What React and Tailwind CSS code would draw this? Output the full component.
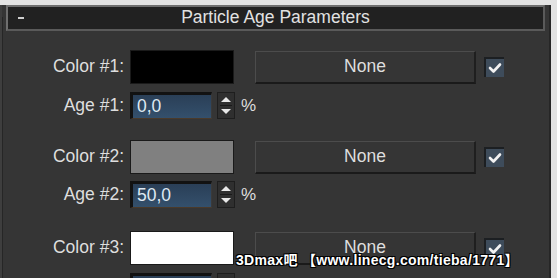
import React from 'react';

const font = { fontFamily: '"Liberation Sans", Arial, sans-serif' };

const Label = ({ children }) => (
  <div className="w-[124px] shrink-0 text-right text-[17.5px] text-[#dedede] leading-none">{children}</div>
);

const Check = () => (
  <div className="w-[20px] h-[20px] bg-[#3e4c5b] border-t-2 border-l-2 border-[#1c1f22] flex items-center justify-center">
    <svg width="14" height="12" viewBox="0 0 14 12">
      <path d="M2 6 L5.5 9.5 L12 2.5" stroke="#f2f2f2" strokeWidth="2.6" fill="none" strokeLinecap="round" strokeLinejoin="round" />
    </svg>
  </div>
);

const NoneButton = () => (
  <div className="ml-[21px] w-[221px] h-[33px] border-t border-l border-[#4c4c4c] border-b-2 border-r-2 border-b-[#1a1a1a] border-r-[#1f1f1f] bg-[#353535] flex items-center justify-center text-[17.5px] text-[#dedede]">
    None
  </div>
);

const ColorRow = ({ n, color }) => (
  <div className="flex items-center h-[34px] shrink-0">
    <Label>Color #{n}:</Label>
    <div className="ml-[6px] w-[104px] h-[34px] border border-[#1a1a1a]" style={{ background: color }} />
    <NoneButton />
    <div className="ml-[8px]"><Check /></div>
  </div>
);

const AgeRow = ({ n, value }) => (
  <div className="flex items-center h-[27px] shrink-0">
    <Label>Age #{n}:</Label>
    <div className="ml-[6px] w-[82px] h-[27px] border-t-[3px] border-l-[3px] border-[#121212] border-b border-r border-b-[#4a3a2a] border-r-[#3a3a3a] bg-gradient-to-b from-[#2a3f57] to-[#34506c] flex items-center pl-[4px] text-[17.5px] text-[#dfe9f2] leading-none">
      {value}
    </div>
    <div className="ml-[5px] w-[18px] h-[27px] bg-[#2f2f2f] border border-[#1e1e1e] flex flex-col items-center justify-center gap-[3px]">
      <div className="w-0 h-0 border-l-[5px] border-r-[5px] border-b-[5px] border-l-transparent border-r-transparent border-b-[#e8e8e8]" />
      <div className="w-[12px] h-px bg-[#1a1a1a]" />
      <div className="w-0 h-0 border-l-[5px] border-r-[5px] border-t-[5px] border-l-transparent border-r-transparent border-t-[#e8e8e8]" />
    </div>
    <div className="ml-[6px] text-[17px] text-[#dedede] leading-none">%</div>
  </div>
);

export default function App() {
  return (
    <div className="relative w-[557px] h-[278px] overflow-hidden bg-[#e3e3e3] pt-[5px] flex items-start" style={font}>
      <div className="w-[551px] h-[400px] shrink-0 bg-[#353535] border-l-2 border-l-[#3e3e3e] border-r-2 border-r-[#262626] flex">
        <div className="w-px h-full bg-[#262626] mt-[12px]" />
        <div className="flex-1 flex flex-col">
          <div className="shrink-0 ml-[3px] mr-[4px] h-[26px] bg-[#212121] border-t-2 border-l-2 border-[#6f6f6f] border-b-2 border-r-2 border-b-[#5a5a5a] border-r-[#5a5a5a] flex items-center relative">
            <div className="absolute left-[10px] top-[10px] w-[6px] h-[2px] bg-[#cfcfcf]" />
            <div className="flex-1 text-center text-[17.5px] text-[#e2e2e2] leading-none">Particle Age Parameters</div>
          </div>
          <div className="shrink-0 mt-[19px] -ml-[3px] flex flex-col">
            <div className="flex flex-col gap-[8px]">
              <ColorRow n={1} color="#000000" />
              <AgeRow n={1} value="0,0" />
            </div>
            <div className="mt-[21px] flex flex-col gap-[7px]">
              <ColorRow n={2} color="#808080" />
              <AgeRow n={2} value="50,0" />
            </div>
            <div className="mt-[23px] flex flex-col gap-[8px]">
              <ColorRow n={3} color="#ffffff" />
              <AgeRow n={3} value="100,0" />
            </div>
          </div>
        </div>
      </div>
      <div
        className="absolute left-[236px] top-[253px] text-[14px] font-bold text-white leading-none whitespace-nowrap tracking-[0.3px]"
        style={{ fontFamily: '"Liberation Sans", "Noto Sans CJK SC", sans-serif', textShadow: '1px 1px 0 #000, -1px -1px 0 #000, 1px -1px 0 #000, -1px 1px 0 #000' }}
      >
        3Dmax吧 【www.linecg.com/tieba/1771】
      </div>
    </div>
  );
}
